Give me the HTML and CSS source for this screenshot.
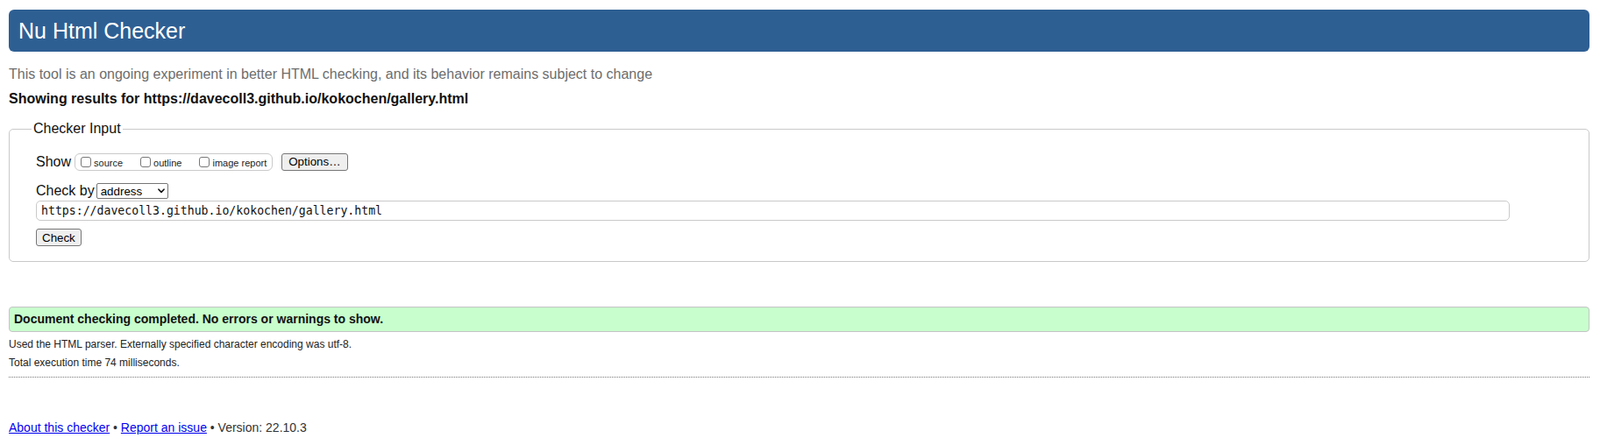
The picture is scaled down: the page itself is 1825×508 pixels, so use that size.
FILE: index.html
```html
<!DOCTYPE html>
<html lang="en">
<head>
<meta charset="utf-8">
<title>Showing results for https://davecoll3.github.io/kokochen/gallery.html - Nu Html Checker</title>
<link rel="stylesheet" href="styles.css">
</head>
<body>
<h1 class="title">Nu Html Checker</h1>
<p class="intro">This tool is an ongoing experiment in better HTML checking, and its behavior remains subject to change</p>
<p class="target">Showing results for https://davecoll3.github.io/kokochen/gallery.html</p>
<form class="form">
  <fieldset class="checker">
    <legend class="checker-legend">Checker Input</legend>
    <div class="row row-show">
      <span class="row-label">Show</span>
      <span class="show-group">
        <label class="opt"><input type="checkbox" class="cb"><span>source</span></label>
        <label class="opt"><input type="checkbox" class="cb"><span>outline</span></label>
        <label class="opt"><input type="checkbox" class="cb"><span>image report</span></label>
      </span>
      <button type="button" class="btn btn-options">Options…</button>
    </div>
    <div class="row row-by">
      <span class="row-label">Check by</span>
      <span class="select-wrap">
        <select class="select"><option>address</option></select>
        <svg class="chev" width="8" height="6" viewBox="0 0 8 6"><path d="M1 1.2 L4 4.4 L7 1.2" fill="none" stroke="#111" stroke-width="1.6" stroke-linecap="round" stroke-linejoin="round"/></svg>
      </span>
    </div>
    <input class="url" type="url" value="https://davecoll3.github.io/kokochen/gallery.html">
    <button type="button" class="btn btn-check">Check</button>
  </fieldset>
</form>
<div class="result">Document checking completed. No errors or warnings to show.</div>
<p class="details">Used the HTML parser. Externally specified character encoding was utf-8.</p>
<p class="details">Total execution time 74 milliseconds.</p>
<hr class="sep">
<p class="footer"><a href="#">About this checker</a> • <a href="#">Report an issue</a> • Version: 22.10.3</p>
</body>
</html>
```
FILE: styles.css
```css
* { box-sizing: border-box; }
html, body { margin: 0; }
body {
  padding: 11px 12px 0 10px;
  font-family: "Liberation Sans", Arial, Helvetica, sans-serif;
  color: #111;
  background: #fff;
}
.title {
  margin: 0;
  height: 48px;
  line-height: 48px;
  padding: 0 11px;
  font-size: 25px;
  font-weight: normal;
  color: #fff;
  background: #2e5f93;
  border-radius: 6px;
}
.intro {
  margin: 17px 0 0;
  font-size: 16px;
  line-height: 18px;
  color: #6d6d6d;
}
.target {
  margin: 10px 0 0;
  font-size: 16px;
  line-height: 18px;
  font-weight: bold;
}
.form { margin: 0; }
.checker {
  margin: 16px 0 0;
  padding: 18px 30px 17px 30px;
  border: 1px solid #c9c9c9;
  border-radius: 5px;
  min-width: 0;
}
.checker-legend {
  margin-left: -5px;
  padding: 0 2px;
  font-size: 16px;
  line-height: 18px;
  color: #111;
}
.row { display: flex; align-items: center; }
.row-show { height: 21px; }
.row-by { height: 19px; margin-top: 13px; }
.row-label { font-size: 16px; line-height: 18px; }
.show-group {
  display: inline-flex;
  align-items: center;
  height: 20px;
  margin-left: 4px;
  padding: 0 6px;
  border: 1px solid #cacaca;
  border-radius: 6px;
}
.opt {
  display: inline-flex;
  align-items: center;
  font-size: 11px;
  color: #222;
  margin-right: 20px;
}
.opt:last-child { margin-right: 0; }
.opt span { margin-left: 3px; padding-top: 2px; }
.cb {
  appearance: none;
  -webkit-appearance: none;
  width: 12px;
  height: 12px;
  margin: 0;
  border: 1px solid #777;
  border-radius: 3px;
  background: #fff;
}
.btn {
  height: 20px;
  padding: 0 6px;
  font-family: "Liberation Sans", Arial, sans-serif;
  font-size: 13.33px;
  color: #000;
  background: #efefef;
  border: 1px solid #767676;
  border-radius: 3px;
}
.btn-options { margin-left: 10px; padding: 0 7px; }
.select-wrap { position: relative; display: inline-block; margin-left: 2px; height: 18px; }
.select {
  appearance: none;
  -webkit-appearance: none;
  width: 82px;
  height: 18px;
  margin: 0;
  padding: 0 0 0 4px;
  font-family: "Liberation Sans", Arial, sans-serif;
  font-size: 13.33px;
  color: #000;
  background: #fff;
  border: 1px solid #767676;
  border-radius: 2px;
}
.chev {
  position: absolute;
  right: 4px;
  top: 6px;
  pointer-events: none;
}
.url {
  display: block;
  margin: 2px 0 0;
  width: calc(100% - 60px);
  height: 23px;
  padding: 0 5px;
  border: 1px solid #cacaca;
  border-radius: 5px;
  font-family: "DejaVu Sans Mono", Menlo, monospace;
  font-size: 13.2px;
  color: #111;
  background: #fff;
}
.btn-check { display: block; margin-top: 9px; }
.result {
  margin: 51px 0 0;
  height: 29px;
  padding: 0 5px;
  border: 1px solid #c4c4c4;
  border-radius: 4px;
  background: #c8fecd;
  font-size: 14px;
  font-weight: bold;
  line-height: 27px;
}
.details {
  margin: 7px 0 0;
  font-size: 12px;
  line-height: 14px;
  color: #222;
}
.sep {
  margin: 9px 0 0;
  height: 0;
  border: 0;
  border-top: 1px dotted #777;
}
.footer {
  margin: 49px 0 0;
  font-size: 14px;
  line-height: 16px;
  color: #333;
}
.footer a { color: #00e; text-decoration: underline; }
```
